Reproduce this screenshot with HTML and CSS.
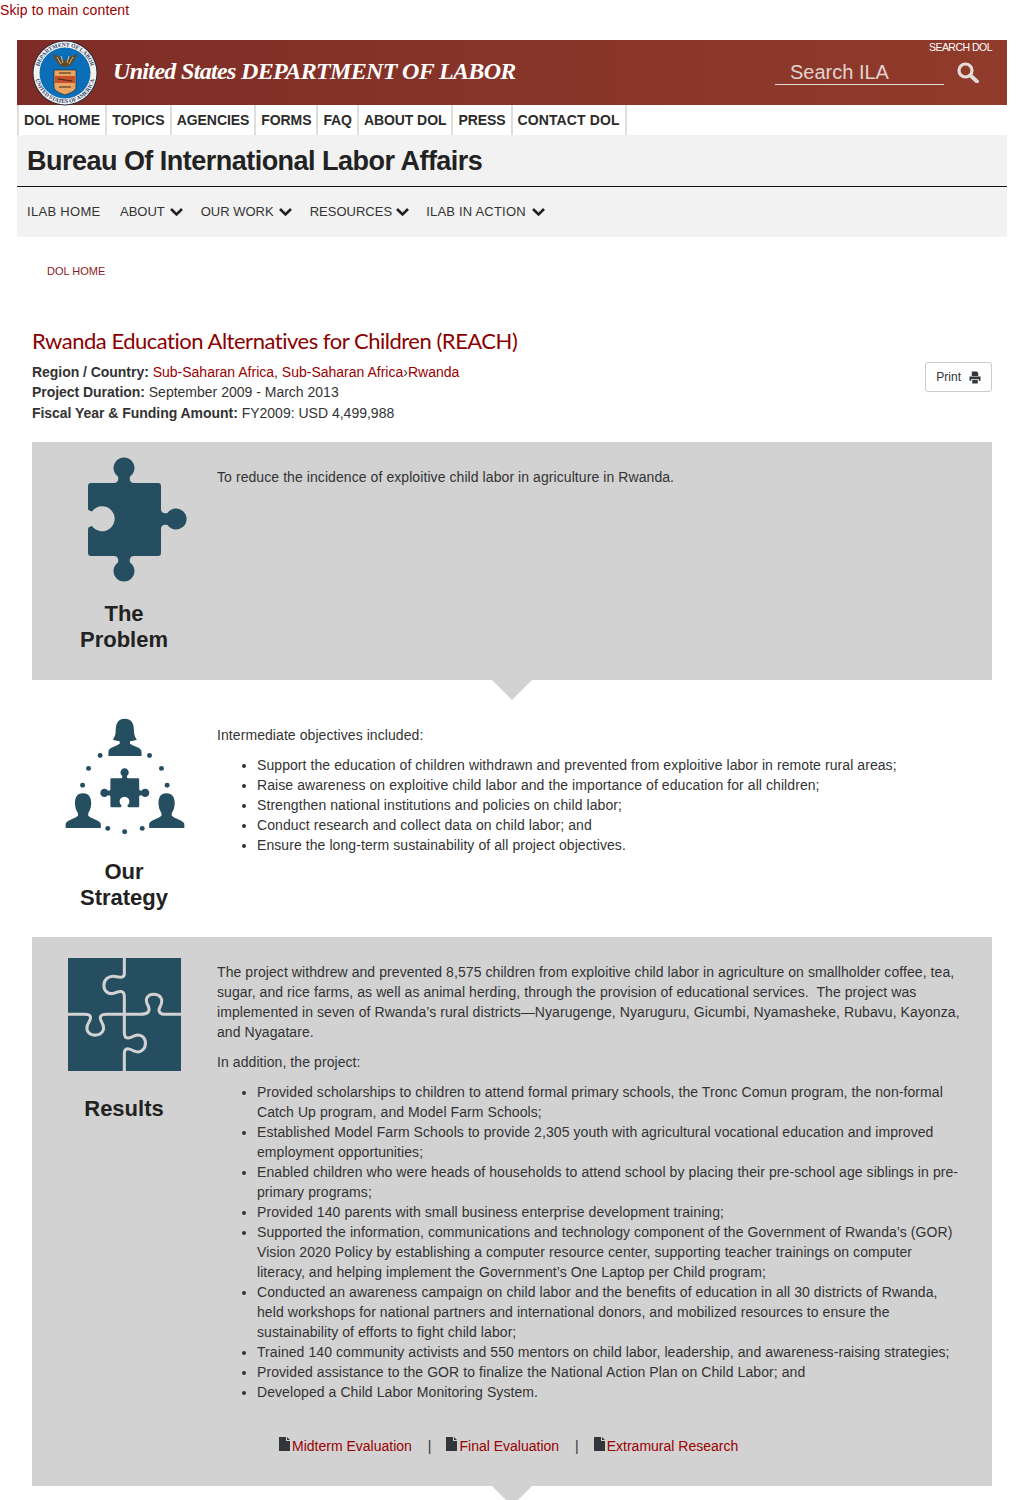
FILE: index.html
```html
<!DOCTYPE html>
<html lang="en">
<head>
<meta charset="utf-8">
<title>Rwanda Education Alternatives for Children (REACH)</title>
<link rel="stylesheet" href="styles.css">
</head>
<body>
<svg class="defs" width="0" height="0" aria-hidden="true">
  <defs>
    <path id="piece" d="M3 26H26C29 26 31 24 30 19.5A10.5 10.5 0 1 1 42 19.5C41 24 43 26 46 26H70Q73 26 73 29V52C73 55 75 57 79.5 56A10.5 10.5 0 1 1 79.5 68C75 67 73 69 73 72V96Q73 99 70 99H46C43 99 41 101 42 105.5A10.5 10.5 0 1 1 30 105.5C31 101 29 99 26 99H3Q0 99 0 96V72C0 70 2 69.5 4 69A12.5 12.5 0 1 0 4 54.5C2 54 0 53.5 0 51.5V29Q0 26 3 26Z"/>
    <path id="man" d="M127 280C108 280 103 295 103 310C103 322 107 332 112 340V348C100 358 78 362 75 372V385H181V372C177 362 155 358 143 348V340C148 332 152 322 152 310C152 295 146 280 127 280Z"/>
    <path id="file" d="M0 0H7V4H11V14H0ZM8 0L11 3H8Z"/>
    <path id="chev" d="M1 2L6.5 7.5L12 2" fill="none" stroke="#222" stroke-width="2.6"/>
  </defs>
</svg>

<a class="skip" href="#main">Skip to main content</a>

<div class="page">
  <header class="masthead">
    <svg class="seal" width="66" height="66" viewBox="0 0 66 66">
      <defs>
        <path id="arcTop" d="M6.5 33A26.5 26.5 0 0 1 59.5 33"/>
        <path id="arcBot" d="M3 33A30 30 0 0 0 63 33"/>
      </defs>
      <circle cx="33" cy="33" r="32.5" fill="#2b2b3a"/>
      <circle cx="33" cy="33" r="31.5" fill="#f2f2ee"/>
      <circle cx="33" cy="33" r="25.5" fill="#0a6fb8"/>
      <text class="seal-text"><textPath href="#arcTop" startOffset="50%" text-anchor="middle">DEPARTMENT OF LABOR</textPath></text>
      <text class="seal-text"><textPath href="#arcBot" startOffset="50%" text-anchor="middle">UNITED STATES OF AMERICA</textPath></text>
      <path d="M33 27C29 27 24 23 20.5 14C24 15 25 16 27 16C29 20 31 20 33 20C35 20 37 20 39 16C41 16 42 15 45.5 14C42 23 37 27 33 27Z" fill="#5f4a2c"/>
      <path d="M25 17L29 24M29 16L31 23M41 17L37 24M37 16L35 23" stroke="#d9b77d" stroke-width="1"/>
      <path d="M22 30H44V47C44 51 38 53 33 55C28 53 22 51 22 47Z" fill="#e9a565" stroke="#2a2a2a" stroke-width=".7"/>
      <rect x="23" y="36" width="20" height="7" fill="#c4502c"/>
      <path d="M27 33H39M26 39L40 41M27 47H39" stroke="#3b2a1a" stroke-width="1.2"/>
    </svg>
    <div class="agency">United States DEPARTMENT OF LABOR</div>
    <div class="search">
      <div class="search-label">SEARCH DOL</div>
      <div class="search-row">
        <div class="search-field"><span class="search-text">Search ILA</span></div>
        <svg class="search-icon" width="22" height="21" viewBox="0 0 22 21">
          <circle cx="8.5" cy="8.5" r="6.5" fill="none" stroke="#e2ddd8" stroke-width="3.2"/>
          <path d="M13.5 13.5L20 19.5" stroke="#e2ddd8" stroke-width="3.8" stroke-linecap="round"/>
        </svg>
      </div>
    </div>
  </header>

  <nav class="topnav">
    <a class="wide" href="#">DOL HOME</a>
    <a class="wide" href="#">TOPICS</a>
    <a href="#">AGENCIES</a>
    <a href="#">FORMS</a>
    <a href="#">FAQ</a>
    <a href="#">ABOUT DOL</a>
    <a href="#">PRESS</a>
    <a class="wide" href="#">CONTACT DOL</a>
  </nav>

  <div class="bureau">Bureau Of International Labor Affairs</div>

  <nav class="subnav">
    <a href="#">ILAB HOME</a>
    <a href="#">ABOUT <svg class="chev" width="13" height="10" viewBox="0 0 13 10"><use href="#chev"/></svg></a>
    <a href="#">OUR WORK <svg class="chev" width="13" height="10" viewBox="0 0 13 10"><use href="#chev"/></svg></a>
    <a href="#">RESOURCES <svg class="chev tight" width="13" height="10" viewBox="0 0 13 10"><use href="#chev"/></svg></a>
    <a href="#">ILAB IN ACTION <svg class="chev" width="13" height="10" viewBox="0 0 13 10"><use href="#chev"/></svg></a>
  </nav>

  <div class="crumb"><a href="#">DOL HOME</a></div>

  <main class="main" id="main">
    <h1 class="title">Rwanda Education Alternatives for Children (REACH)</h1>
    <div class="meta-row">
      <div class="meta">
        <div><b>Region / Country:</b> <a href="#">Sub-Saharan Africa</a>, <a href="#">Sub-Saharan Africa</a>›<a href="#">Rwanda</a></div>
        <div><b>Project Duration:</b> September 2009 - March 2013</div>
        <div><b>Fiscal Year &amp; Funding Amount:</b> FY2009: USD 4,499,988</div>
      </div>
      <a class="print" href="#">Print
        <svg width="12" height="13" viewBox="0 0 13 13"><path d="M3 0H8.5L10 1.5V5H3ZM0.5 5.5H12.5V10H10.5V8H2.5V10H0.5ZM3.5 9H9.5V13H3.5Z" fill="#33363b"/></svg>
      </a>
    </div>

    <section class="panel grey problem">
      <div class="side">
        <svg class="icon" width="100" height="125" viewBox="0 0 100 125"><use href="#piece" fill="#264e61"/></svg>
        <h2>The<br>Problem</h2>
      </div>
      <div class="body">
        <p>To reduce the incidence of exploitive child labor in agriculture in Rwanda.</p>
      </div>
    </section>

    <section class="panel strategy">
      <div class="side">
        <svg class="icon" width="120" height="118" viewBox="73 54 362 354" fill="#264e61">
          <path d="M253 55C232 55 226 72 226 90C226 105 222 112 217 118C225 122 232 122 238 123V131C225 140 205 142 204 155V168H304V155C303 142 283 140 269 131V123C275 122 283 122 290 118C285 112 281 105 281 90C281 72 275 55 253 55Z"/>
          <use href="#man"/>
          <use href="#man" x="252"/>
          <circle cx="179" cy="166" r="7.5"/><circle cx="328" cy="166" r="7.5"/>
          <circle cx="144" cy="205" r="7.5"/><circle cx="364" cy="205" r="7.5"/>
          <circle cx="126" cy="256" r="7.5"/><circle cx="381" cy="256" r="7.5"/>
          <circle cx="202" cy="386" r="7.5"/><circle cx="253" cy="396" r="7.5"/><circle cx="306" cy="386" r="7.5"/>
          <use href="#piece" transform="translate(179 322) rotate(-90) scale(1.19)"/>
        </svg>
        <h2>Our<br>Strategy</h2>
      </div>
      <div class="body">
        <p>Intermediate objectives included:</p>
        <ul>
          <li>Support the education of children withdrawn and prevented from exploitive labor in remote rural areas;</li>
          <li>Raise awareness on exploitive child labor and the importance of education for all children;</li>
          <li>Strengthen national institutions and policies on child labor;</li>
          <li>Conduct research and collect data on child labor; and</li>
          <li>Ensure the long-term sustainability of all project objectives.</li>
        </ul>
      </div>
    </section>

    <section class="panel grey results">
      <div class="side">
        <svg class="icon" width="113" height="113" viewBox="85 40 337 337">
          <rect x="85" y="40" width="337" height="337" fill="#264e61"/>
          <g fill="none" stroke="#d2d2d2" stroke-width="9">
            <path d="M253 40V88C253 100 240 98 225 95C205 92 192 105 192 122C192 138 205 150 222 145C238 138 253 135 253 155V208"/>
            <path d="M253 208H300C325 208 330 198 325 185C310 160 325 148 340 148C358 148 372 160 360 185C352 198 358 208 375 208H422"/>
            <path d="M85 208H135C155 208 155 218 148 230C132 255 148 270 165 270C185 270 200 255 185 230C178 218 180 208 200 208H253"/>
            <path d="M253 208V262C253 285 270 280 283 272C300 265 316 275 316 295C316 312 300 325 283 318C268 310 253 305 253 325V377"/>
          </g>
        </svg>
        <h2>Results</h2>
      </div>
      <div class="body">
        <p>The project withdrew and prevented 8,575 children from exploitive child labor in agriculture on smallholder coffee, tea, sugar, and rice farms, as well as animal herding, through the provision of educational services.&nbsp; The project was implemented in seven of Rwanda’s rural districts—Nyarugenge, Nyaruguru, Gicumbi, Nyamasheke, Rubavu, Kayonza, and Nyagatare.</p>
        <p>In addition, the project:</p>
        <ul>
          <li>Provided scholarships to children to attend formal primary schools, the Tronc Comun program, the non-formal Catch Up program, and Model Farm Schools;</li>
          <li>Established Model Farm Schools to provide 2,305 youth with agricultural vocational education and improved employment opportunities;</li>
          <li>Enabled children who were heads of households to attend school by placing their pre-school age siblings in pre-primary programs;</li>
          <li>Provided 140 parents with small business enterprise development training;</li>
          <li>Supported the information, communications and technology component of the Government of Rwanda’s (GOR) Vision 2020 Policy by establishing a computer resource center, supporting teacher trainings on computer literacy, and helping implement the Government’s One Laptop per Child program;</li>
          <li>Conducted an awareness campaign on child labor and the benefits of education in all 30 districts of Rwanda, held workshops for national partners and international donors, and mobilized resources to ensure the sustainability of efforts to fight child labor;</li>
          <li>Trained 140 community activists and 550 mentors on child labor, leadership, and awareness-raising strategies;</li>
          <li>Provided assistance to the GOR to finalize the National Action Plan on Child Labor; and</li>
          <li>Developed a Child Labor Monitoring System.</li>
        </ul>
        <div class="docs">
          <a href="#"><svg width="11" height="14" viewBox="0 0 11 14"><use href="#file" fill="#33363b"/></svg>Midterm Evaluation</a>
          <span class="sep">|</span>
          <a href="#"><svg width="11" height="14" viewBox="0 0 11 14"><use href="#file" fill="#33363b"/></svg>Final Evaluation</a>
          <span class="sep">|</span>
          <a href="#"><svg width="11" height="14" viewBox="0 0 11 14"><use href="#file" fill="#33363b"/></svg>Extramural Research</a>
        </div>
      </div>
    </section>
  </main>
</div>
</body>
</html>
```

FILE: styles.css
```css
html, body {
  margin: 0;
  height: 1500px;
  overflow: hidden;
}
body {
  background: #fff;
  color: #333;
  font-family: "Liberation Sans", Arial, sans-serif;
  font-size: 14px;
  line-height: 20px;
}
a {
  color: #990000;
  text-decoration: none;
}
.defs {
  display: block;
  height: 0;
}
.skip {
  display: block;
  height: 40px;
  line-height: 20px;
  letter-spacing: 0.12px;
}
.page {
  margin: 0 17px;
}

/* masthead */
.masthead {
  display: flex;
  height: 65px;
  background: linear-gradient(90deg, #7e2d26, #903b2b);
}
.seal {
  flex: none;
  margin-left: 15px;
  align-self: center;
}
.seal-text {
  font-family: "Liberation Serif", serif;
  font-size: 5.6px;
  font-weight: bold;
  fill: #27406e;
}
.agency {
  margin-left: 15px;
  color: #fff;
  font-family: "Liberation Serif", serif;
  font-size: 24px;
  font-style: italic;
  font-weight: bold;
  line-height: 63px;
  letter-spacing: -0.66px;
  white-space: nowrap;
}
.search {
  margin-left: auto;
  width: 232px;
}
.search-label {
  padding: 1px 15px 0 0;
  color: #fff;
  font-size: 10.5px;
  line-height: 13px;
  letter-spacing: -0.52px;
  text-align: right;
}
.search-row {
  display: flex;
  align-items: center;
  margin-top: 5px;
}
.search-field {
  width: 154px;
  height: 25px;
  padding-left: 15px;
  border-bottom: 1px solid #e8dcd8;
}
.search-text {
  color: #e3d3cf;
  font-size: 20px;
  line-height: 26px;
}
.search-icon {
  margin: 0 0 0 13px;
}

/* top nav */
.topnav {
  display: flex;
  height: 30px;
  width: max-content;
  border-right: 2px solid #dededa;
}
.topnav a {
  padding: 0 5px;
  border-left: 2px solid #dededa;
  color: #2b2b2b;
  font-size: 14px;
  font-weight: bold;
  line-height: 30px;
  letter-spacing: -0.08px;
}
.topnav a.wide {
  letter-spacing: 0.12px;
}

/* bureau band */
.bureau {
  height: 51px;
  padding-left: 10px;
  background: #f2f2f2;
  border-bottom: 1px solid #111;
  color: #222;
  font-size: 27px;
  font-weight: bold;
  line-height: 52px;
  letter-spacing: -0.52px;
}
.subnav {
  display: flex;
  gap: 17.5px;
  height: 50px;
  padding-left: 10px;
  background: #f2f2f2;
  align-items: center;
}
.subnav a {
  display: flex;
  align-items: center;
  color: #333;
  font-size: 13px;
  white-space: pre;
}
.subnav a:first-child {
  margin-right: 2px;
  letter-spacing: 0.3px;
}
.subnav a:last-child {
  letter-spacing: 0.2px;
}
.chev {
  margin-left: 2px;
}
.chev.tight {
  margin-left: 0;
}

/* breadcrumb */
.crumb {
  padding: 24px 0 0 30px;
  font-size: 11px;
  line-height: 20px;
}
.crumb a {
  color: #8b1c1c;
}

/* main */
.main {
  padding: 0 15px;
}
.title {
  margin: 45px 0 0;
  color: #8b0000;
  font-family: Lato, "Liberation Sans", sans-serif;
  font-size: 22px;
  font-weight: normal;
  line-height: 30px;
  letter-spacing: -0.48px;
}
.meta-row {
  display: flex;
  justify-content: space-between;
  align-items: flex-start;
  margin-top: 6px;
}
.meta {
  line-height: 20.33px;
}
.meta b {
  letter-spacing: -0.04px;
}
.print {
  display: flex;
  align-items: center;
  gap: 8px;
  height: 28px;
  padding: 0 10px;
  border: 1px solid #ccc;
  border-radius: 3px;
  color: #333;
  font-size: 12px;
}

/* panels */
.panel {
  position: relative;
  display: flex;
}
.meta-row + .panel {
  margin-top: 19px;
}
.panel.grey {
  background: #d2d2d2;
}
.panel.grey::after {
  content: "";
  position: absolute;
  left: 460px;
  top: 100%;
  border-style: solid;
  border-width: 20px 20px 0;
  border-color: #d2d2d2 transparent transparent;
}
.side {
  flex: none;
  width: 185px;
  text-align: center;
}
.icon {
  display: block;
  margin: 0 auto;
}
.side h2 {
  margin: 0;
  padding-right: 1px;
  color: #222;
  font-size: 22px;
  line-height: 26px;
}
.problem .side {
  padding: 15px 0 27px;
}
.problem .icon {
  margin: 0 0 19px 56px;
}
.strategy .side {
  padding: 38px 0 26px;
}
.strategy .icon {
  margin-bottom: 23px;
}
.results .side {
  padding-top: 21px;
}
.results .icon {
  margin-bottom: 25px;
}
.body {
  flex: 1;
  min-width: 0;
  padding: 25px 30px 30px 0;
  letter-spacing: 0.076px;
}
.strategy .body {
  padding-top: 45px;
}
.body p {
  margin: 0 0 10px;
}
.body ul {
  margin: 0 0 10px;
  padding-left: 40px;
}

/* document links */
.docs {
  display: flex;
  align-items: center;
  margin: 34px 0 0 62px;
  letter-spacing: 0;
}
.docs a {
  display: flex;
  align-items: flex-start;
  gap: 2px;
  line-height: 20px;
}
.docs svg {
  margin-top: 1px;
}
.sep {
  margin: 0 15px 0 16px;
  color: #333;
}
```
